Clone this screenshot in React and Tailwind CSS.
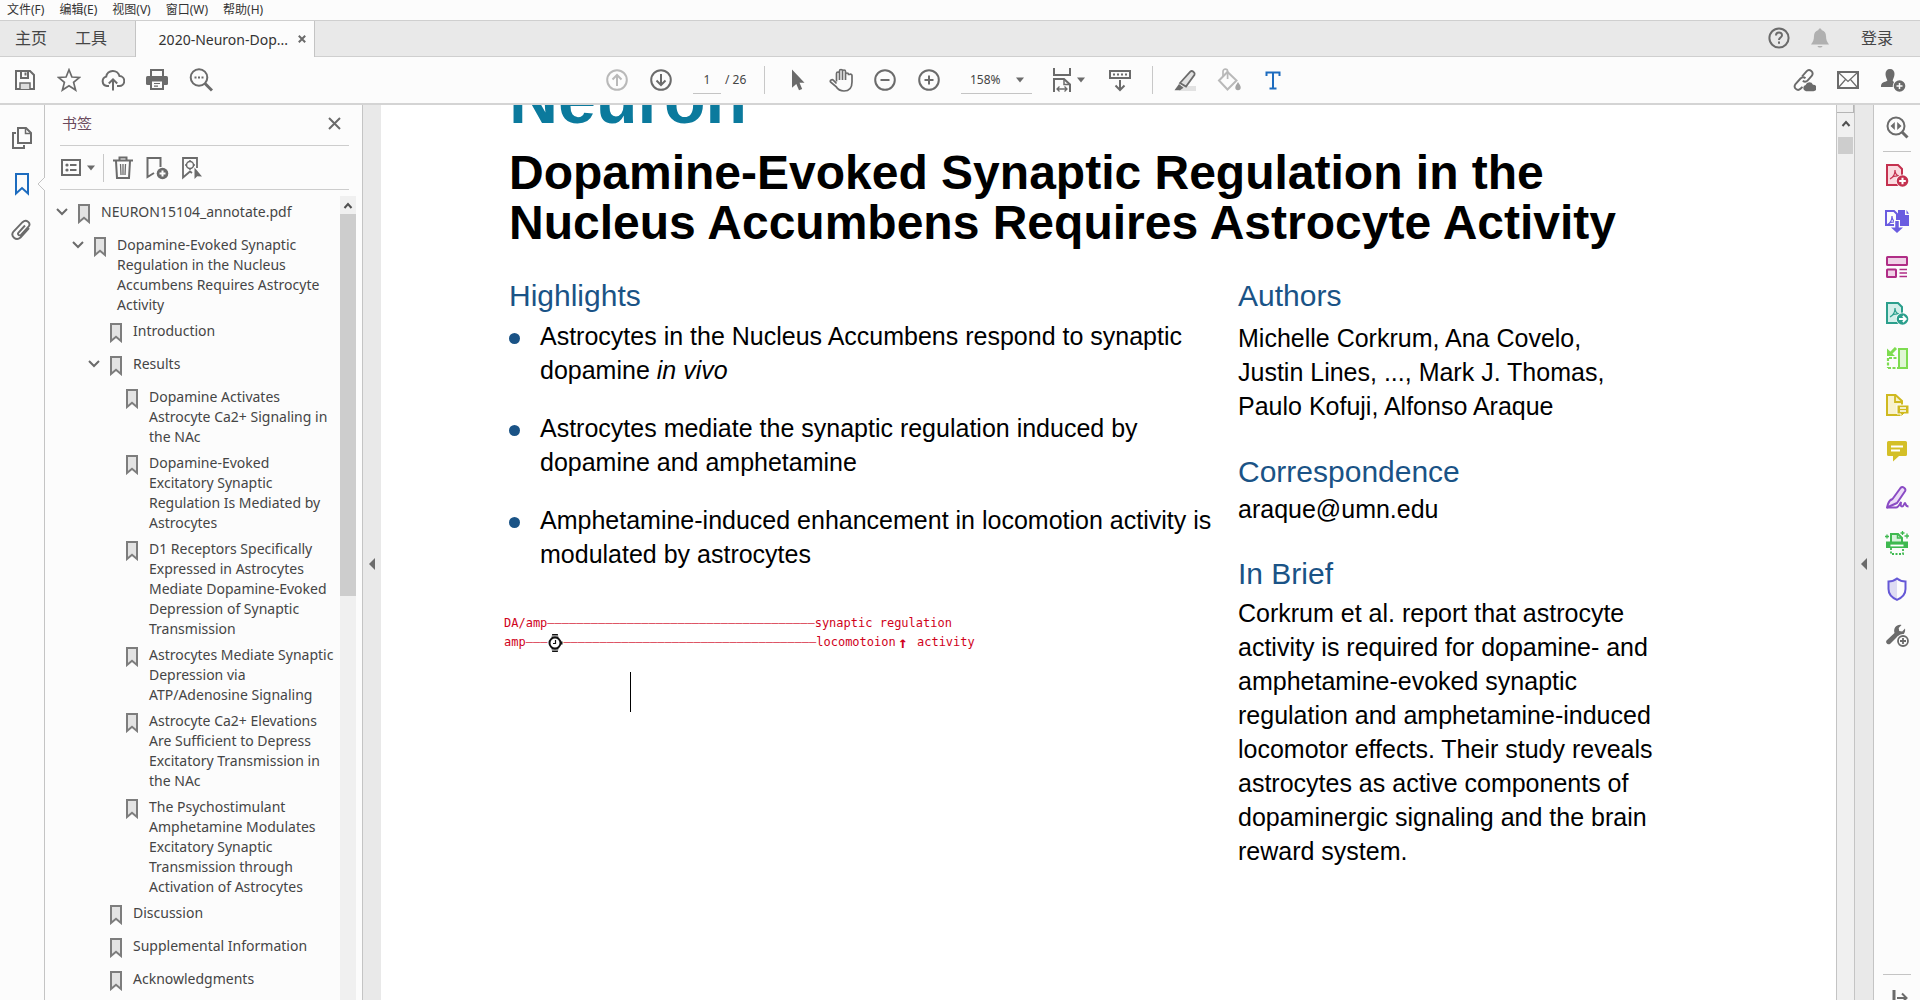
import React from "react";

const INK = "#6b6b6b";

function Icon({ w = 24, h = 24, box, className = "", children, ...rest }) {
  return (
    <svg
      width={w}
      height={h}
      viewBox={box || `0 0 ${w} ${h}`}
      fill="none"
      stroke={INK}
      strokeWidth="2"
      className={`shrink-0 ${className}`}
      aria-hidden="true"
      {...rest}
    >
      {children}
    </svg>
  );
}

function IconButton({ label, className = "", children }) {
  return (
    <button type="button" aria-label={label} className={`flex shrink-0 items-center justify-center ${className}`}>
      {children}
    </button>
  );
}

function Caret() {
  return (
    <svg width="8" height="6" viewBox="0 0 8 6" className="shrink-0" aria-hidden="true">
      <path d="M0 0.5h8L4 5.5z" fill={INK} />
    </svg>
  );
}

/* ---------- top tool icons ---------- */
const SaveIcon = () => (
  <Icon>
    <path d="M3 3h14l4 4v14H3z" />
    <path d="M8 3v7h7V3M12.500 4.500v3" />
    <path d="M7 21v-6h10v6" fill="#dcdcdc" strokeWidth="1.500" />
  </Icon>
);
const StarIcon = () => (
  <Icon>
    <path d="M12 1.800l2.900 7.200 7.600.5-5.900 4.900 2 7.600L12 17.800 5.400 22l2-7.600L1.500 9.500l7.600-.5z" strokeWidth="1.700" />
  </Icon>
);
const CloudIcon = () => (
  <Icon>
    <path d="M8 18H6a4.800 4.800 0 0 1-.8-9.400A6.800 6.800 0 0 1 18.500 8a5 5 0 0 1-.5 10h-2" />
    <path d="M12 22.500V12M7.800 15.500L12 11.300l4.200 4.200" />
  </Icon>
);
const PrintIcon = () => (
  <Icon>
    <path d="M6 8V2h12v6" />
    <rect x="1" y="8" width="22" height="9" rx="1.500" fill={INK} stroke="none" />
    <path d="M6 12.500h12V21H6z" fill="#fcfcfc" />
    <path d="M9 15.500h6M9 18.200h4" strokeWidth="1.200" />
  </Icon>
);
const FindIcon = () => (
  <Icon>
    <circle cx="10" cy="9.500" r="8.300" />
    <path d="M16 15.500l7 7" strokeWidth="3" />
    <path d="M5.500 9.500h2M9 9.500h2M12.500 9.500h2" />
  </Icon>
);
const ArrowCircle = ({ down }) => (
  <Icon stroke={down ? INK : "#b9b9b9"}>
    <circle cx="12" cy="12" r="9.800" />
    {down ? <path d="M12 6v11M7.500 12.500L12 17l4.500-4.500" /> : <path d="M12 18V7M7.500 11.500L12 7l4.500 4.500" />}
  </Icon>
);
const PointerIcon = () => (
  <Icon stroke="none">
    <path d="M7 1.500v18.300l4.300-3.800 2.700 6.300 3.200-1.400-2.700-6.200h5z" fill={INK} />
  </Icon>
);
const HandIcon = () => (
  <Icon strokeWidth="1.700">
    <path d="M7.500 13.500V5.500a1.500 1.500 0 0 1 3 0V12M10.500 10V3a1.500 1.500 0 0 1 3 0v9M13.500 10V3.500a1.500 1.500 0 0 1 3 0V12M16.500 10V6.500a1.500 1.500 0 0 1 3 0h1a1.500 1.500 0 0 1 2.500 1V14c0 6-3 9-8 9-4.500 0-6.500-2-8-4.500L1.500 14c-.8-1.700 1.500-3 3-1.700l3 3.200" />
  </Icon>
);
const ZoomSign = ({ plus }) => (
  <Icon>
    <circle cx="12" cy="12" r="9.800" />
    <path d="M7.500 12h9" />
    {plus && <path d="M12 7.500v9" />}
  </Icon>
);
const FitIcon = () => (
  <Icon w={20} h={26}>
    <path d="M2 1v7h16V1" />
    <path d="M2 25V12h10l6 5.500V25" />
    <path d="M12 12v5.500h6" strokeWidth="1.500" />
    <path d="M5.500 22h9M7.500 19.500L5 22l2.500 2.500M12.500 19.500L15 22l-2.500 2.500" strokeWidth="1.300" />
  </Icon>
);
const ScrollModeIcon = () => (
  <Icon>
    <path d="M2 3h20v7H2z" />
    <path d="M5 6.500h2M9 6.500h2M13 6.500h2M17 6.500h2" strokeWidth="1.800" />
    <path d="M12 12v9.500M7.500 17.500L12 22l4.500-4.500" />
  </Icon>
);
const HighlighterIcon = () => (
  <Icon>
    <path d="M9 18h14v5H6z" fill="#e2e2e2" stroke="none" />
    <path d="M7 15L17.500 3.500c1.500-1.300 5 .8 4 3.300L13 18.500z" fill="#e2e2e2" strokeWidth="1.800" />
    <path d="M6 16l4.500 3.800-3.500 2.400H1.500z" fill={INK} stroke="none" />
  </Icon>
);
const BucketIcon = () => (
  <Icon stroke="#b9b9b9">
    <path d="M2 12.500L10.500 4l9 8.500-9 9z" />
    <path d="M6 8.500V3.500a2.300 2.300 0 0 1 4.600 0V11" strokeWidth="1.700" />
    <path d="M21 14c1.600 2.500 2.700 3.800 2.700 5.500a2.700 2.700 0 0 1-5.400 0c0-1.700 1.200-3 2.700-5.500z" fill="#a4a4a4" stroke="none" />
  </Icon>
);
const TypeIcon = () => (
  <Icon stroke="#1d6cbf">
    <path d="M5.500 8V4.500h13V8M12 4v16.500M8.500 20.500h7" />
  </Icon>
);
const LinkCloudIcon = () => (
  <Icon strokeWidth="1.900">
    <path d="M10 8.500l4.500-5.200c3-3 8 .8 5.200 4.700l-4.200 4.600c-1.400 1.400-3.300 1.300-4.700.2" />
    <path d="M13.500 10.200c-1.500-1.300-3.600-1.200-5 .3l-5 5.500c-2.700 3.800 2 7.700 5 4.800l2-2" />
    <path d="M14 23.300a3.300 3.300 0 0 1-.4-6.400 4 4 0 0 1 7.400-.2 3.300 3.300 0 0 1 .4 6.600z" fill={INK} stroke="none" />
  </Icon>
);
const MailIcon = () => (
  <Icon>
    <path d="M2 4h20v16H2z" />
    <path d="M3 5l9 8.500L21 5M3 19l6.500-7.500M21 19l-6.500-7.500" strokeWidth="1.200" />
  </Icon>
);
const PersonAddIcon = () => (
  <Icon w={26} stroke="none">
    <path d="M10 1c3 0 4.500 2 4.500 5 0 3-1.500 5-1.800 6.500 0 1 1.800 1.500 3.300 2.300L14 19H1c0-4 2-4.500 4-5.200 1.500-.5 2.300-.8 2.300-1.500C7 11 5.500 9 5.500 6c0-3 1.500-5 4.500-5z" fill={INK} />
    <circle cx="19.500" cy="18" r="6.800" fill="#fcfcfc" />
    <circle cx="19.500" cy="18" r="5.800" fill={INK} />
    <path d="M16.500 18h6M19.500 15v6" stroke="#fcfcfc" strokeWidth="1.500" />
  </Icon>
);

/* ---------- side icons ---------- */
const PagesIcon = () => (
  <Icon>
    <path d="M8 2h8l5 5v10H8z" />
    <path d="M15.500 2v5.500H21" strokeWidth="1.500" />
    <path d="M6 7H3v15h11v-3" />
  </Icon>
);
const RailBookmarkIcon = () => (
  <Icon w={18} h={24} stroke="#1d6cbf">
    <path d="M3 2h12v19.500L9 16l-6 5.500z" />
  </Icon>
);
const ClipIcon = () => (
  <Icon>
    <path d="M16 7.500l-6.500 7c-1.500 2 1 3.800 2.700 2.200l7.300-8c3-4-2.300-8-6-4.500L4.500 13.500c-3.500 4.500 2.500 10 7 6L20 10" strokeWidth="1.900" transform="translate(-1 0)" />
  </Icon>
);
const OptionsIcon = () => (
  <Icon w={20} h={18}>
    <path d="M1 1h18v15H1z" />
    <circle cx="6" cy="6" r="1.600" fill={INK} stroke="none" />
    <circle cx="6" cy="11" r="1.600" fill={INK} stroke="none" />
    <path d="M9 6h6.500M9 11h6.500" strokeWidth="1.800" />
  </Icon>
);
const TrashIcon = () => (
  <Icon w={20} h={24}>
    <path d="M0 4.500h20M6.500 4V1.500h7V4" />
    <path d="M3 5l1 17h12l1-17" />
    <path d="M7.500 8l.5 11M12.500 8l-.5 11M10 8v11" strokeWidth="1.300" />
  </Icon>
);
const BookmarkAddIcon = () => (
  <Icon>
    <path d="M9 17l-6.500 4V2h13v9" />
    <circle cx="17.500" cy="17.500" r="5.800" fill={INK} stroke="none" />
    <path d="M14.500 17.500h6M17.500 14.500v6" stroke="#fcfcfc" />
  </Icon>
);
const BookmarkFindIcon = () => (
  <Icon w={22}>
    <path d="M11 17l-2-1.500-7 6V2h14v10" strokeWidth="1.800" />
    <circle cx="9" cy="9" r="3.500" strokeWidth="1.500" />
    <path d="M9 4v2M9 12v2M4 9h2M12 9h2" strokeWidth="1.400" />
    <path d="M13.500 11.500V23l2.700-2.800 4.800.3z" fill={INK} stroke="none" />
  </Icon>
);
const TreeBookmark = () => (
  <Icon w={12} h={20} className="mt-0.5">
    <path d="M1 1h10v17l-5-4.200L1 18z" fill="#e3e3e3" stroke="#7d7d7d" />
  </Icon>
);

/* ---------- right tool pane icons ---------- */
const PdfMark = ({ color, x = 0 }) => (
  <path
    d="M5 16c3-1.500 5-5.500 5-9M10 7c0 3 1.500 5.500 4.500 6.200M5.500 15.500c2-2 5-3 9-2.500"
    stroke={color}
    strokeWidth="1.200"
    transform={`translate(${x} 0)`}
  />
);
const ViewerIcon = () => (
  <Icon>
    <circle cx="11" cy="10" r="8.500" />
    <path d="M17 16l5.500 5.500" strokeWidth="3" />
    <path d="M9.800 6v8L5.500 10zM12.200 6v8l4.300-4z" fill={INK} stroke="none" />
  </Icon>
);
const CreateIcon = () => (
  <Icon stroke="#c4314f">
    <path d="M2 2h11l4 4v16H2z" fill="#fadbe0" />
    <PdfMark color="#c4314f" />
    <circle cx="17.500" cy="18" r="6.500" fill="#fcfcfc" stroke="none" />
    <circle cx="17.500" cy="18" r="5.800" fill="#c4314f" stroke="none" />
    <path d="M14.200 18h6.600M17.500 14.700v6.600" stroke="#fff" />
  </Icon>
);
const CombineIcon = () => (
  <Icon stroke="#6a5ce0">
    <path d="M1 2h8l3 3v11H1z" />
    <PdfMark color="#6a5ce0" x={-3} />
    <path d="M13 1h7v5h4.500v11H13z" fill="#6a5ce0" stroke="none" />
    <path d="M21.500 1v3.800H24z" fill="#6a5ce0" stroke="none" />
    <path d="M12 11v9" strokeWidth="6" stroke="#fcfcfc" />
    <path d="M12 12v8" strokeWidth="3.500" />
    <path d="M6 18.500h12L12 24z" fill="#6a5ce0" stroke="none" />
  </Icon>
);
const OrganizeIcon = () => (
  <Icon stroke="#b02d86">
    <rect x="2" y="2" width="20" height="8" rx=".5" fill="#f0d2e7" />
    <rect x="2" y="14.500" width="9" height="7.500" rx=".5" fill="#f0d2e7" />
    <path d="M14.500 14.500H22M14.500 18H22M14.500 21.500H22" strokeWidth="1.300" />
  </Icon>
);
const ExportIcon = () => (
  <Icon stroke="#2b9f8c">
    <path d="M2 2h11l4 4v16H2z" fill="#d3efea" />
    <PdfMark color="#2b9f8c" />
    <circle cx="17.500" cy="18" r="6.500" fill="#fcfcfc" stroke="none" />
    <circle cx="17.500" cy="18" r="5.800" fill="#2b9f8c" stroke="none" />
    <path d="M14 18h6M17.800 15l3 3-3 3" stroke="#fff" strokeWidth="1.800" />
  </Icon>
);
const ResizeIcon = () => (
  <Icon stroke="#7edc50">
    <path d="M14 2h8v19h-8z" fill="#e0f6d5" />
    <path d="M3 11v10M3 21h10M4 11h8" strokeDasharray="3 1.500" strokeWidth="2.200" />
    <path d="M11 1L5 7" strokeWidth="3" />
    <path d="M2 1.500v7.500h8z" fill="#7edc50" stroke="none" />
  </Icon>
);
const RequestIcon = () => (
  <Icon stroke="#cfb91f">
    <path d="M2 2h8.500L17 8v14H2z" fill="#f8f2cd" />
    <path d="M10 2v7h7" strokeWidth="1.800" />
    <path d="M12 12h12v9h-5l-3 3v-3h-4z" fill="#cfb91f" stroke="#fcfcfc" strokeWidth="1" />
    <path d="M15 15h6M15 18h6" stroke="#fff" strokeWidth="1.300" />
  </Icon>
);
const CommentIcon = () => (
  <Icon stroke="none">
    <path d="M3.500 2h17A1.500 1.500 0 0 1 22 3.500v12a1.500 1.500 0 0 1-1.500 1.500H14l-6 5.500V17H3.500A1.500 1.500 0 0 1 2 15.500v-12A1.500 1.500 0 0 1 3.500 2z" fill="#d4bf27" />
    <path d="M6 7.500h12M6 11.500h9" stroke="#fff" strokeWidth="1.800" />
  </Icon>
);
const SignIcon = () => (
  <Icon stroke="#8a4bc4">
    <path d="M7.500 14L15.500 3c2-2.300 6 .5 4.500 3.300L12 18l-10 4.500 1-3.500c.8-2.500 1.500-4 4.500-5z" fill="#ecdcf7" strokeLinejoin="round" />
    <path d="M2 22.500h9c2.500 0 4.500-4.500 5-5.500 0 2-1 4.500 1 4.500s2-3.500 3-3.500 0 3.500 3.500 3.500" strokeWidth="1.900" />
  </Icon>
);
const ScanIcon = () => (
  <Icon stroke="#3fb950">
    <path d="M6 11V3h7l4 4v4" fill="#d6f2da" />
    <path d="M12.500 2.500V7H17" strokeWidth="1.500" />
    <path d="M1 10.500h22v6.500H1z" fill="#3fb950" stroke="none" />
    <path d="M5.500 14.500h13" stroke="#fff" strokeWidth="1.800" />
    <path d="M6 17v6h12v-6" strokeDasharray="2 1.500" strokeWidth="1.800" />
    <path d="M2 3.500v4M0 5.500h4M17.500 0v4M15.500 2h4M22 2.500v5M19.500 5h5" strokeWidth="1.300" />
  </Icon>
);
const ShieldIcon = () => (
  <Icon>
    <path d="M12 2v20.500C6 20 3.500 16.500 3.500 12V4.500C7 4.500 9.500 3.500 12 2z" fill="#dedcf3" stroke="none" />
    <path d="M12 1.500c2.500 2 5.500 3 8.500 3V12c0 4.500-3 8.500-8.500 10.800C6.500 20.500 3.500 16.500 3.500 12V4.500c3 0 6-1 8.500-3z" stroke="#6558d6" />
  </Icon>
);
const WrenchIcon = () => (
  <Icon stroke="none">
    <path d="M1.500 17.500l8-7.500C8 5.500 11.500 1 16.500 2L13.700 5l.5 3 3 .5L20 5.500c1 5-3 8.500-7 7.500l-8 8c-2.500 1-4.800-1.500-3.500-3.500z" fill={INK} />
    <circle cx="18" cy="18" r="7" fill="#fcfcfc" />
    <circle cx="18" cy="18" r="5" stroke={INK} strokeWidth="1.800" />
    <path d="M15 18h6M18 15v6" stroke={INK} strokeWidth="1.800" />
  </Icon>
);
const OpenPaneIcon = () => (
  <Icon>
    <path d="M9 0v22" strokeWidth="3" />
    <path d="M12 8h9M17 3.500L21.500 8 17 12.500" />
  </Icon>
);
const WatchIcon = () => (
  <Icon w={16} h={20} stroke="#111">
    <path d="M4.500 5l.7-4h5.600l.7 4zM4.500 15l.7 4h5.600l.7-4z" fill="#111" stroke="none" />
    <path d="M4.500 3h7M4.500 17h7" stroke="#fff" strokeWidth="1" />
    <circle cx="8" cy="10" r="5.500" fill="#fff" />
    <path d="M14 8.500h1.500v3H14z" fill="#111" stroke="none" />
    <path d="M8.500 7v3.500H6" strokeWidth="1.200" />
  </Icon>
);

const menus = ["文件(F)", "编辑(E)", "视图(V)", "窗口(W)", "帮助(H)"];

const bookmarks = [
  { level: 0, open: true, lines: ["NEURON15104_annotate.pdf"] },
  { level: 1, open: true, lines: ["Dopamine-Evoked Synaptic", "Regulation in the Nucleus", "Accumbens Requires Astrocyte", "Activity"] },
  { level: 2, lines: ["Introduction"] },
  { level: 2, open: true, lines: ["Results"] },
  { level: 3, lines: ["Dopamine Activates", "Astrocyte Ca2+ Signaling in", "the NAc"] },
  { level: 3, lines: ["Dopamine-Evoked", "Excitatory Synaptic", "Regulation Is Mediated by", "Astrocytes"] },
  { level: 3, lines: ["D1 Receptors Specifically", "Expressed in Astrocytes", "Mediate Dopamine-Evoked", "Depression of Synaptic", "Transmission"] },
  { level: 3, lines: ["Astrocytes Mediate Synaptic", "Depression via", "ATP/Adenosine Signaling"] },
  { level: 3, lines: ["Astrocyte Ca2+ Elevations", "Are Sufficient to Depress", "Excitatory Transmission in", "the NAc"] },
  { level: 3, lines: ["The Psychostimulant", "Amphetamine Modulates", "Excitatory Synaptic", "Transmission through", "Activation of Astrocytes"] },
  { level: 2, lines: ["Discussion"] },
  { level: 2, lines: ["Supplemental Information"] },
  { level: 2, lines: ["Acknowledgments"] },
];
const indents = ["pl-0", "pl-4", "pl-8", "pl-12"];

const paneTools = [
  ["Create PDF", CreateIcon],
  ["Combine Files", CombineIcon],
  ["Organize Pages", OrganizeIcon],
  ["Export PDF", ExportIcon],
  ["Edit Layout", ResizeIcon],
  ["Request Comments", RequestIcon],
  ["Comment", CommentIcon],
  ["Fill & Sign", SignIcon],
  ["Scan & OCR", ScanIcon],
  ["Protect", ShieldIcon],
  ["More Tools", WrenchIcon],
];

function Lines({ items }) {
  return items.map((t, i) => (
    <span key={i} className="block whitespace-nowrap">
      {t}
    </span>
  ));
}

function Splitter({ label }) {
  return (
    <div className="flex w-[18px] shrink-0 flex-col items-center bg-[#e9e9e9] pt-[453px]">
      <button type="button" aria-label={label}>
        <svg width="6" height="12" viewBox="0 0 6 12" aria-hidden="true">
          <path d="M6 0v12L0 6z" fill={INK} />
        </svg>
      </button>
    </div>
  );
}

function ScrollArrow() {
  return (
    <svg width="10" height="7" viewBox="0 0 10 7" fill="none" stroke="#505050" strokeWidth="2" aria-hidden="true">
      <path d="M1.500 6L5 2l3.500 4" />
    </svg>
  );
}

function Dashes({ count }) {
  return <span className="text-[#dc4a5c]">{"–".repeat(count)}</span>;
}

const heading = "text-[30px] leading-9 text-[#1a5386]";
const body = "text-[25px] leading-[34px] text-black";

export default function App() {
  return (
    <div className="flex h-screen flex-col overflow-hidden bg-[#fcfcfc] font-['Noto_Sans','Noto_Sans_CJK_SC',sans-serif] text-[#454545]">
      <nav className="flex h-5 shrink-0 items-center gap-[15px] px-[7px] text-xs leading-4 text-[#333]">
        {menus.map((m) => (
          <button key={m} type="button" className="whitespace-nowrap">
            {m}
          </button>
        ))}
      </nav>

      <div className="flex h-[37px] shrink-0 border-y border-[#cfcfcf] bg-[#e9e9e9] text-base">
        <button type="button" className="pb-0.5 pl-[15px]">主页</button>
        <button type="button" className="px-7 pb-0.5">工具</button>
        <div className="-mb-px flex w-[180px] items-center justify-end gap-2.5 border-x border-[#c4c4c4] bg-[#fcfcfc] pr-2 text-[14px] text-[#333]">
          <span className="whitespace-nowrap">2020-Neuron-Dop...</span>
          <IconButton label="Close tab">
            <svg width="8" height="8" viewBox="0 0 8 8" stroke={INK} strokeWidth="2" aria-hidden="true">
              <path d="M.8.8l6.400 6.400M7.200.8L.8 7.200" />
            </svg>
          </IconButton>
        </div>
        <div className="ml-auto flex items-center pr-[27px] pb-0.5">
          <IconButton label="Help">
            <Icon>
              <circle cx="12" cy="12" r="9.600" />
              <path d="M9 9.500c0-4 6-4 6-.3 0 2.300-3 2.300-3 4.800M12 15.500v2.300" />
            </Icon>
          </IconButton>
          <IconButton label="Notifications" className="mr-[29px] ml-[17px]">
            <Icon stroke="none">
              <path d="M12 2.500c1 0 1.500.6 1.600 1.500 3 1 4.400 3.300 4.400 6 0 4 1 5.500 3 8.500H3c2-3 3-4.500 3-8.500 0-2.700 1.400-5 4.400-6 .1-.9.600-1.500 1.600-1.500zM9.500 20h5c-.5 2-4.500 2-5 0z" fill="#b0b0b0" />
            </Icon>
          </IconButton>
          <button type="button">登录</button>
        </div>
      </div>

      <div className="grid h-12 shrink-0 grid-cols-[1fr_auto_1fr] items-center border-b-2 border-[#d4d4d4]">
        <div className="flex items-center gap-5 pl-[13px]">
          <IconButton label="Save"><SaveIcon /></IconButton>
          <IconButton label="Star"><StarIcon /></IconButton>
          <IconButton label="Upload"><CloudIcon /></IconButton>
          <IconButton label="Print"><PrintIcon /></IconButton>
          <IconButton label="Find"><FindIcon /></IconButton>
        </div>
        <div className="flex items-center pr-[30px] text-xs leading-6">
          <IconButton label="Previous page" className="mr-5"><ArrowCircle /></IconButton>
          <IconButton label="Next page" className="mr-5"><ArrowCircle down /></IconButton>
          <input aria-label="Page number" defaultValue="1" className="h-7 w-7 border-b border-[#c4c4c4] text-center outline-none" />
          <span className="ml-1 w-[39px] whitespace-nowrap">/ 26</span>
          <span className="h-7 w-px bg-[#c8c8c8]" />
          <IconButton label="Select" className="ml-5"><PointerIcon /></IconButton>
          <IconButton label="Pan" className="ml-5"><HandIcon /></IconButton>
          <IconButton label="Zoom out" className="ml-5"><ZoomSign /></IconButton>
          <IconButton label="Zoom in" className="ml-5"><ZoomSign plus /></IconButton>
          <button type="button" className="ml-5 flex h-7 w-[71px] items-center justify-between border-b border-[#c4c4c4] pr-2 pl-[9px]">
            158%
            <Caret />
          </button>
          <button type="button" aria-label="Page fit" className="ml-5 flex items-center gap-[5px]">
            <FitIcon />
            <Caret />
          </button>
          <IconButton label="Scrolling mode" className="ml-[23px]"><ScrollModeIcon /></IconButton>
          <span className="ml-5 h-7 w-px bg-[#c8c8c8]" />
          <IconButton label="Highlight" className="ml-5"><HighlighterIcon /></IconButton>
          <IconButton label="Fill" className="ml-5"><BucketIcon /></IconButton>
          <IconButton label="Add text" className="ml-5"><TypeIcon /></IconButton>
        </div>
        <div className="flex items-center justify-end gap-5 pr-[14px]">
          <IconButton label="Share link"><LinkCloudIcon /></IconButton>
          <IconButton label="Email"><MailIcon /></IconButton>
          <IconButton label="Add person"><PersonAddIcon /></IconButton>
        </div>
      </div>

      <div className="flex min-h-0 flex-1">
        <div className="relative flex w-[45px] shrink-0 flex-col items-center gap-[22px] border-r border-[#c4c4c4] pt-[21px]">
          <IconButton label="Page thumbnails"><PagesIcon /></IconButton>
          <IconButton label="Bookmarks"><RailBookmarkIcon /></IconButton>
          <IconButton label="Attachments"><ClipIcon /></IconButton>
          <svg width="8" height="14" viewBox="0 0 8 14" className="absolute top-[72px] -right-px" aria-hidden="true">
            <path d="M8 0L1 7l7 7" fill="#fcfcfc" stroke="#c4c4c4" />
          </svg>
        </div>

        <aside className="flex w-[318px] shrink-0 flex-col border-r border-[#c4c4c4] pl-[15px]">
          <div className="mr-[13px] flex h-[41px] shrink-0 items-center justify-between border-b border-[#cdcdcd] pr-2 pb-1 pl-0.5">
            <h2 className="text-[15px] leading-5 text-[#6b4a5c]">书签</h2>
            <IconButton label="Close panel">
              <svg width="13" height="13" viewBox="0 0 13 13" stroke={INK} strokeWidth="2" aria-hidden="true">
                <path d="M1 1l11 11M12 1L1 12" />
              </svg>
            </IconButton>
          </div>
          <div className="mr-[13px] flex h-11 shrink-0 items-center border-b border-[#cdcdcd] pl-px">
            <button type="button" aria-label="Options" className="flex items-center gap-1.5">
              <OptionsIcon />
              <Caret />
            </button>
            <span className="ml-2 h-7 w-px bg-[#c8c8c8]" />
            <IconButton label="Delete bookmark" className="ml-[9px]"><TrashIcon /></IconButton>
            <IconButton label="New bookmark" className="ml-3"><BookmarkAddIcon /></IconButton>
            <IconButton label="Find bookmark" className="ml-3"><BookmarkFindIcon /></IconButton>
          </div>
          <div className="flex min-h-0 flex-1 pt-1.5">
            <ul className="-ml-2 flex-1 overflow-hidden pt-[3px] pl-2 text-[14px] leading-5">
              {bookmarks.map((b) => (
                <li key={b.lines[0]} className={indents[b.level]}>
                  <div className="flex min-h-[33px] py-[3px]">
                    <span className="w-[18px] shrink-0">
                      {b.open && (
                        <button type="button" aria-label="Collapse" className="-ml-1 flex h-5 w-3 items-center">
                          <svg width="12" height="8" viewBox="0 0 12 8" fill="none" stroke={INK} strokeWidth="2" className="shrink-0" aria-hidden="true">
                            <path d="M1 1l5 5 5-5" />
                          </svg>
                        </button>
                      )}
                    </span>
                    <TreeBookmark />
                    <a href="#doc" className="ml-[11px]">
                      <Lines items={b.lines} />
                    </a>
                  </div>
                </li>
              ))}
            </ul>
            <div className="mr-[6px] flex w-4 shrink-0 flex-col bg-[#f0f0f0]">
              <button type="button" aria-label="Scroll up" className="flex h-[18px] items-center justify-center">
                <ScrollArrow />
              </button>
              <div className="h-[382px] bg-[#cdcdcd]" />
            </div>
          </div>
        </aside>
        <Splitter label="Collapse navigation pane" />

        <main id="doc" className="min-w-0 flex-1 overflow-hidden bg-white pl-32 font-['Liberation_Sans',Arial,sans-serif]">
          <div className="flex h-7 items-end">
            <p className="text-[68px] leading-[68px] font-bold text-[#0b7a9d]">Neuron</p>
          </div>
          <h1 className="mt-[15px] text-[48px] leading-[50px] font-bold whitespace-nowrap text-black">
            Dopamine-Evoked Synaptic Regulation in the
            <br />
            Nucleus Accumbens Requires Astrocyte Activity
          </h1>
          <div className="mt-[30px] flex">
            <section className="w-[729px] shrink-0">
              <h2 className={heading}>Highlights</h2>
              <ul className="mt-[5px] flex flex-col gap-6">
                {[
                  ["Astrocytes in the Nucleus Accumbens respond to synaptic", <>dopamine <i>in vivo</i></>],
                  ["Astrocytes mediate the synaptic regulation induced by", "dopamine and amphetamine"],
                  ["Amphetamine-induced enhancement in locomotion activity is", "modulated by astrocytes"],
                ].map((lines, i) => (
                  <li key={i} className={`flex ${body}`}>
                    <span className="mt-[14px] mr-5 size-[11px] shrink-0 rounded-full bg-[#1a5386]" />
                    <div>
                      <Lines items={lines} />
                    </div>
                  </li>
                ))}
              </ul>
              <div className="mt-[43px] -ml-[5px] font-['DejaVu_Sans_Mono',monospace] text-xs leading-[19px] whitespace-pre text-[#d0021b]">
                <p>DA/amp<Dashes count={37} />synaptic regulation</p>
                <p className="flex">
                  amp<Dashes count={3} />
                  <span className="flex w-4 items-center"><WatchIcon /></span>
                  <Dashes count={35} />locomotoion
                  <b className="w-3.5 text-center text-base leading-[19px]">↑</b> activity
                </p>
              </div>
              <div className="mt-[19px] ml-[121px] h-10 w-px bg-black" />
            </section>
            <section>
              <h2 className={heading}>Authors</h2>
              <p className={`mt-[7px] ${body}`}>
                <Lines items={["Michelle Corkrum, Ana Covelo,", "Justin Lines, ..., Mark J. Thomas,", "Paulo Kofuji, Alfonso Araque"]} />
              </p>
              <h2 className={`mt-[31px] ${heading}`}>Correspondence</h2>
              <p className={`mt-0.5 ${body}`}>araque@umn.edu</p>
              <h2 className={`mt-[30px] ${heading}`}>In Brief</h2>
              <p className={`mt-1 ${body}`}>
                <Lines
                  items={[
                    "Corkrum et al. report that astrocyte",
                    "activity is required for dopamine- and",
                    "amphetamine-evoked synaptic",
                    "regulation and amphetamine-induced",
                    "locomotor effects. Their study reveals",
                    "astrocytes as active components of",
                    "dopaminergic signaling and the brain",
                    "reward system.",
                  ]}
                />
              </p>
            </section>
          </div>
        </main>

        <div className="flex w-[19px] shrink-0 flex-col border-x border-[#c4c4c4] bg-[#f0f0f0]">
          <div className="h-2 border-r border-b border-[#b5b5b5]" />
          <button type="button" aria-label="Scroll page up" className="flex h-6 items-center justify-center pb-1">
            <ScrollArrow />
          </button>
          <div className="mx-px h-[17px] bg-[#cdcdcd]" />
        </div>
        <Splitter label="Collapse tools pane" />

        <aside className="flex w-[47px] shrink-0 flex-col items-center overflow-hidden border-l border-[#c4c4c4]">
          <IconButton label="Search tools" className="mt-[11px] shrink-0"><ViewerIcon /></IconButton>
          <span className="mt-[11px] h-px w-7 shrink-0 bg-[#c4c4c4]" />
          <div className="mt-[11px] flex flex-col gap-[22px]">
            {paneTools.map(([label, Glyph]) => (
              <IconButton key={label} label={label}><Glyph /></IconButton>
            ))}
          </div>
          <span className="mt-auto h-px w-7 shrink-0 bg-[#c4c4c4]" />
          <div className="mt-[15px] h-[10px] shrink-0">
            <IconButton label="Open pane"><OpenPaneIcon /></IconButton>
          </div>
        </aside>
      </div>
    </div>
  );
}
